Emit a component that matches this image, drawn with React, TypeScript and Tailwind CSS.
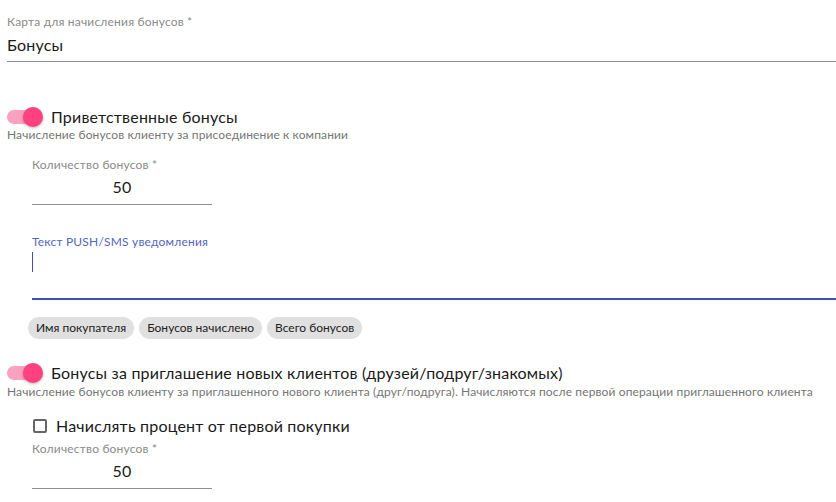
import React from 'react';

const font = { fontFamily: 'Lato, "Noto Sans", sans-serif', letterSpacing: '0.012em' };

function Toggle() {
  return (
    <div className="relative w-[36px] h-[20px] flex items-center shrink-0">
      <div className="w-[34px] h-[14px] rounded-full bg-[#f9a1c0]" />
      <div className="absolute right-0 top-0 w-[20px] h-[20px] rounded-full bg-[#ff4081] shadow-[0_1px_3px_rgba(0,0,0,0.3)]" />
    </div>
  );
}

function NumberField() {
  return (
    <div className="w-[180px] pt-[2px]">
      <div className="text-[12px] leading-[16px] text-[#8a8a8a]">Количество бонусов *</div>
      <div className="text-[16px] leading-[20px] text-center text-[#1a1a1a] pt-[4px] pb-[7px]">50</div>
      <div className="h-px bg-[#8f8f8f]" />
    </div>
  );
}

function Chip({ children }: { children: React.ReactNode }) {
  return (
    <span className="h-[22px] px-[8px] rounded-full bg-[#e0e0e0] text-[12px] leading-[22px] text-[#222] tracking-normal">
      {children}
    </span>
  );
}

export default function App() {
  return (
    <div className="w-[836px] h-[502px] bg-white overflow-hidden pl-[7px]" style={font}>
      <div className="pt-[14px]">
        <div className="text-[12px] leading-[16px] text-[#8a8a8a]">Карта для начисления бонусов *</div>
        <div className="text-[16px] leading-[20px] text-[#1a1a1a] pt-[5px] pb-[6px]">Бонусы</div>
        <div className="h-px bg-[#8f8f8f]" />
      </div>

      <div className="mt-[45px] flex items-center gap-[8px]">
        <Toggle />
        <span className="text-[16px] leading-[20px] text-[#1a1a1a]">Приветственные бонусы</span>
      </div>
      <div className="text-[12px] leading-[16px] text-[#757575] tracking-[0.01em]">
        Начисление бонусов клиенту за присоединение к компании
      </div>

      <div className="pl-[25px] mt-[12px]">
        <NumberField />

        <div className="mt-[29px]">
          <div className="text-[12px] leading-[16px] text-[#5466c0]">Текст PUSH/SMS уведомления</div>
          <div className="h-[48px] pt-[2px]">
            <div className="w-px h-[20px] bg-[#3f51b5]" />
          </div>
          <div className="h-[2px] bg-[#3f51b5]" />
        </div>

        <div className="flex gap-[5px] mt-[17px] -ml-[4px]">
          <Chip>Имя покупателя</Chip>
          <Chip>Бонусов начислено</Chip>
          <Chip>Всего бонусов</Chip>
        </div>
      </div>

      <div className="mt-[24px] flex items-center gap-[8px]">
        <Toggle />
        <span className="text-[16px] leading-[20px] text-[#1a1a1a]">
          Бонусы за приглашение новых клиентов (друзей/подруг/знакомых)
        </span>
      </div>
      <div className="text-[12px] leading-[16px] text-[#757575] mt-[1px] tracking-[0.01em]">
        Начисление бонусов клиенту за приглашенного нового клиента (друг/подруга). Начисляются после первой операции приглашенного клиента
      </div>

      <div className="pl-[25px] mt-[16px]">
        <div className="flex items-center gap-[9px]">
          <div className="w-[14px] h-[14px] ml-[1px] border-2 border-[#666] rounded-[2px]" />
          <span className="text-[16px] leading-[20px] text-[#1a1a1a]">Начислять процент от первой покупки</span>
        </div>
        <div className="mt-[3px]">
          <NumberField />
        </div>
      </div>
    </div>
  );
}
